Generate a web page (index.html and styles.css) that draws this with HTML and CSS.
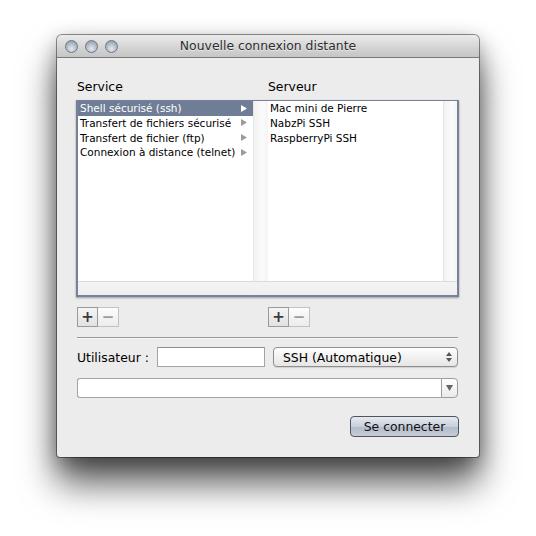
FILE: index.html
```html
<!DOCTYPE html>
<html lang="fr">
<head>
<meta charset="utf-8">
<title>Nouvelle connexion distante</title>
<link rel="stylesheet" href="styles.css">
</head>
<body>
<div class="window">
  <div class="titlebar">
    <div class="lights">
      <span class="light"></span><span class="light"></span><span class="light"></span>
    </div>
    <div class="title">Nouvelle connexion distante</div>
    <div></div>
  </div>
  <div class="content">
    <div class="labels">
      <div class="label">Service</div>
      <div class="label">Serveur</div>
    </div>
    <div class="browser">
      <div class="columns">
        <div class="column">
          <div class="list">
            <div class="row selected"><span>Shell sécurisé (ssh)</span><svg class="tri" width="6" height="7" viewBox="0 0 6 7"><polygon points="0,0 6,3.5 0,7"/></svg></div>
            <div class="row"><span>Transfert de fichiers sécurisé</span><svg class="tri" width="6" height="7" viewBox="0 0 6 7"><polygon points="0,0 6,3.5 0,7"/></svg></div>
            <div class="row"><span>Transfert de fichier (ftp)</span><svg class="tri" width="6" height="7" viewBox="0 0 6 7"><polygon points="0,0 6,3.5 0,7"/></svg></div>
            <div class="row"><span>Connexion à distance (telnet)</span><svg class="tri" width="6" height="7" viewBox="0 0 6 7"><polygon points="0,0 6,3.5 0,7"/></svg></div>
          </div>
          <div class="gutter"></div>
        </div>
        <div class="column">
          <div class="list">
            <div class="row"><span>Mac mini de Pierre</span></div>
            <div class="row"><span>NabzPi SSH</span></div>
            <div class="row"><span>RaspberryPi SSH</span></div>
          </div>
          <div class="gutter"></div>
        </div>
      </div>
      <div class="hscroll"></div>
    </div>
    <div class="adders">
      <div class="seg"><span class="segbtn plus">+</span><span class="segbtn minus">−</span></div>
      <div class="seg"><span class="segbtn plus">+</span><span class="segbtn minus">−</span></div>
    </div>
    <div class="sep"></div>
    <div class="userrow">
      <span class="ulabel">Utilisateur :</span>
      <span class="field"></span>
      <span class="popup"><span>SSH (Automatique)</span>
        <svg width="6" height="10" viewBox="0 0 6 10"><polygon points="0,4 3,0 6,4" /><polygon points="0,6 6,6 3,10"/></svg>
      </span>
    </div>
    <div class="combo">
      <span class="combo-field"></span>
      <span class="combo-btn"><svg width="7" height="6" viewBox="0 0 7 6"><polygon points="0,0 7,0 3.5,6"/></svg></span>
    </div>
    <div class="actions">
      <span class="connect">Se connecter</span>
    </div>
  </div>
</div>
</body>
</html>
```
FILE: styles.css
```css
html, body {
  margin: 0;
  padding: 0;
  background: #ffffff;
}
body {
  width: 536px;
  height: 536px;
  overflow: hidden;
  font-family: "DejaVu Sans", "Open Sans", sans-serif;
  color: #000;
}
.window {
  margin: 35px 0 0 57px;
  width: 422px;
  height: 422px;
  box-sizing: border-box;
  background: #ececec;
  border-radius: 5px 5px 3px 3px;
  box-shadow: 0 0 0 1px rgba(0,0,0,0.42), 0 26px 36px rgba(0,0,0,0.66), 0 6px 20px rgba(0,0,0,0.32);
  overflow: hidden;
}
.titlebar {
  height: 22px;
  border-bottom: 1px solid #7a7a7a;
  background: linear-gradient(#ebebeb, #d3d3d3 60%, #c6c6c6);
  display: grid;
  grid-template-columns: 1fr auto 1fr;
  align-items: center;
  border-radius: 5px 5px 0 0;
}
.lights {
  display: flex;
  gap: 7px;
  padding-left: 8px;
}
.light {
  box-sizing: content-box;
  width: 11px;
  height: 11px;
  border-radius: 50%;
  border: 1px solid #6f7883;
  background: radial-gradient(circle at 50% 70%, #e4e9ee 0%, #b9c3cd 45%, #8793a0 100%);
}
.title {
  font-size: 12.4px;
  color: #2e2e2e;
  line-height: 22px;
  text-shadow: 0 1px 0 rgba(255,255,255,0.5);
}
.content {
  padding: 0 20px 0 19px;
}
.labels {
  margin-top: 21px;
  display: grid;
  grid-template-columns: 191px 1fr;
  height: 16px;
  line-height: 16px;
  font-size: 12.4px;
  padding-left: 1px;
}
.browser {
  margin-top: 5px;
  width: 383px;
  height: 197px;
  box-sizing: border-box;
  border: 2px solid #76819a;
  border-top-width: 1px;
  box-shadow: 0 1px 2px rgba(0,0,0,0.35);
  display: flex;
  flex-direction: column;
  background: #fff;
}
.columns {
  display: grid;
  grid-template-columns: 190px 189px;
  height: 180px;
}
.column {
  display: flex;
}
.list {
  width: 175px;
  background: #fff;
}
.gutter {
  flex: 1;
  border-left: 1px solid #e6e6e6;
  background: linear-gradient(to right, #f2f2f2, #fbfbfb 60%, #f4f4f4);
}
.row {
  height: 14.67px;
  display: flex;
  align-items: center;
  justify-content: space-between;
  padding: 0 6px 0 2px;
  font-size: 10.5px;
  line-height: 14px;
  white-space: nowrap;
}
.row .tri {
  fill: #9b9b9b;
}
.row.selected {
  background: #6f7d96;
  color: #fff;
}
.row.selected .tri {
  fill: #fff;
}
.hscroll {
  flex: 1;
  border-top: 1px solid #dadada;
  background: linear-gradient(#f4f4f4, #eeeeee);
}
.adders {
  margin-top: 10px;
  display: grid;
  grid-template-columns: 191px 1fr;
  padding-left: 1px;
}
.seg {
  display: flex;
}
.segbtn {
  width: 21px;
  height: 20px;
  box-sizing: border-box;
  border: 1px solid #a9a9a9;
  background: linear-gradient(#fdfdfd, #ececec);
  display: flex;
  align-items: center;
  justify-content: center;
  font-family: "DejaVu Sans", sans-serif;
  font-size: 15px;
  font-weight: bold;
  line-height: 1;
}
.segbtn.plus {
  color: #3a3a3a;
  border-color: #9a9a9a;
  background: linear-gradient(#f4f4f4, #e2e2e2);
}
.segbtn.minus {
  border-left: none;
  color: #9c9c9c;
  border-color: #c2c2c2;
}
.sep {
  margin-top: 10px;
  margin-left: 1px;
  width: 381px;
  height: 1px;
  background: #999;
  box-shadow: 0 1px 0 #f8f8f8;
}
.userrow {
  margin-top: 9px;
  display: flex;
  align-items: center;
  height: 20px;
  padding-left: 1px;
}
.ulabel {
  font-size: 12.4px;
  width: 80px;
}
.field {
  width: 108px;
  height: 20px;
  box-sizing: border-box;
  background: #fff;
  border: 1px solid #a4a4a4;
  border-top-color: #8e8e8e;
}
.popup {
  margin-left: 8px;
  width: 185px;
  height: 20px;
  box-sizing: border-box;
  border: 1px solid #8f8f8f;
  border-radius: 4px;
  background: linear-gradient(#ffffff, #f1f1f1 50%, #e6e6e6);
  box-shadow: 0 1px 1px rgba(0,0,0,0.12);
  display: flex;
  align-items: center;
  justify-content: space-between;
  padding: 0 5px 0 9px;
  font-size: 12.4px;
}
.popup svg {
  fill: #555;
}
.combo {
  margin-top: 11px;
  margin-left: 1px;
  width: 381px;
  height: 20px;
  display: flex;
}
.combo-field {
  flex: 1;
  box-sizing: border-box;
  background: #fff;
  border: 1px solid #a4a4a4;
  border-right: none;
  border-radius: 3px 0 0 3px;
}
.combo-btn {
  width: 17px;
  box-sizing: border-box;
  border: 1px solid #9d9d9d;
  border-radius: 0 4px 4px 0;
  background: linear-gradient(#ffffff, #eaeaea);
  display: flex;
  align-items: center;
  justify-content: center;
}
.combo-btn svg {
  fill: #666;
}
.actions {
  margin-top: 18px;
  display: flex;
  justify-content: flex-end;
}
.connect {
  width: 109px;
  height: 21px;
  box-sizing: border-box;
  border: 1px solid #4f5660;
  border-radius: 4px;
  background: linear-gradient(#e6eaf0, #c9d0db 50%, #b3bccb 55%, #c6cdd8);
  display: flex;
  align-items: center;
  justify-content: center;
  font-size: 12.4px;
  color: #111;
}
```
